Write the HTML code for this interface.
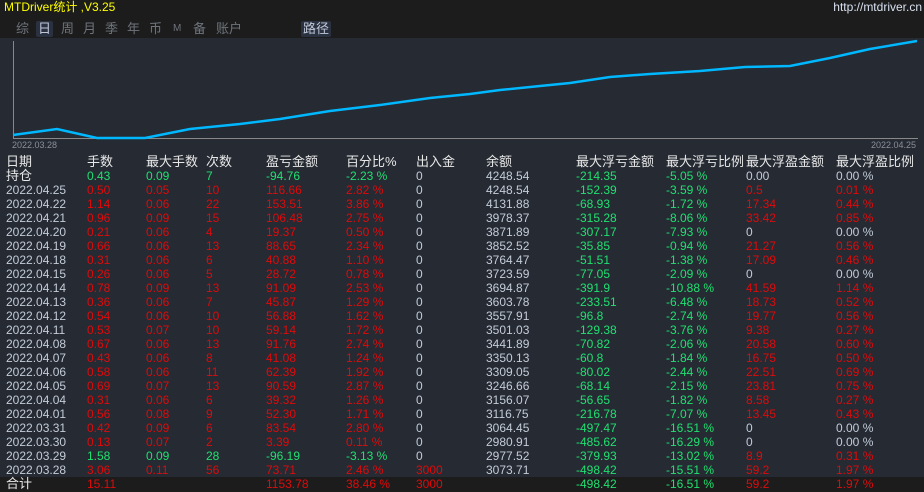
<!DOCTYPE html>
<html><head><meta charset="utf-8"><style>
body{margin:0;width:924px;height:492px;overflow:hidden;background:#252a33;font-family:"Liberation Sans","Noto Sans CJK SC",sans-serif;font-size:12px;position:relative}
.top{position:absolute;left:0;top:0;width:924px;height:38px;background:#1c1c1c}
.title{position:absolute;left:4px;top:0;color:#ffff00;font-size:12px;line-height:14px}
.url{position:absolute;right:2px;top:0;color:#d8e0f0;font-size:12px;line-height:14px}
.tab{position:absolute;top:21px;color:#6e747c;font-size:13px;line-height:16px}
.tab.on{background:#2a3140;color:#c0c8d8;padding:0 2px;border-radius:2px}
.r{position:absolute;left:0;width:924px;height:14px;line-height:14px;white-space:nowrap}
.r span{position:absolute;top:0}
.c0{left:6px}.c1{left:87px}.c2{left:146px}.c3{left:206px}.c4{left:266px}.c5{left:346px}.c6{left:416px}.c7{left:486px}.c8{left:576px}.c9{left:666px}.c10{left:746px}.c11{left:836px}
.g{color:#20e070}.d{color:#e00a0a}.w{color:#c4ccd8}.h{color:#e8e8e8;font-size:13px}
</style></head><body>
<div class="top"></div>
<div class="title">MTDriver统计 ,V3.25</div>
<div class="url">http://mtdriver.cn</div>
<div class="tab" style="left:16px">综</div>
<div class="tab on" style="left:36px">日</div>
<div class="tab" style="left:61px">周</div>
<div class="tab" style="left:83px">月</div>
<div class="tab" style="left:105px">季</div>
<div class="tab" style="left:127px">年</div>
<div class="tab" style="left:149px">币</div>
<div class="tab" style="left:173px;font-size:10px">M</div>
<div class="tab" style="left:193px">备</div>
<div class="tab" style="left:216px">账户</div>
<div class="tab on" style="left:301px">路径</div>
<svg style="position:absolute;left:0;top:38px" width="924" height="112">
<line x1="13.5" y1="3" x2="13.5" y2="100" stroke="#888" stroke-width="1"/>
<line x1="13" y1="100.5" x2="918" y2="100.5" stroke="#888" stroke-width="1"/>
<polyline fill="none" stroke="#00b8ff" stroke-width="2.5" points="13,97 57,91 97,100 145,100 190,91 240,86 280,81 330,73 380,67 430,60 470,56 500,52 540,48 570,45 610,39 650,36 700,33 745,29 790,28 830,20 870,11 917,3"/>
<text x="12" y="110" fill="#8a909a" font-size="9" font-family="Liberation Sans">2022.03.28</text>
<text x="871" y="110" fill="#8a909a" font-size="9" font-family="Liberation Sans">2022.04.25</text>
</svg>
<div class="r h" style="top:155px"><span class="c0">日期</span><span class="c1">手数</span><span class="c2">最大手数</span><span class="c3">次数</span><span class="c4">盈亏金额</span><span class="c5">百分比%</span><span class="c6">出入金</span><span class="c7">余额</span><span class="c8">最大浮亏金额</span><span class="c9">最大浮亏比例</span><span class="c10">最大浮盈金额</span><span class="c11">最大浮盈比例</span></div>
<div class="r" style="top:169px"><span class="c0 h">持仓</span><span class="c1 g">0.43</span><span class="c2 g">0.09</span><span class="c3 g">7</span><span class="c4 g">-94.76</span><span class="c5 g">-2.23 %</span><span class="c6 w">0</span><span class="c7 w">4248.54</span><span class="c8 g">-214.35</span><span class="c9 g">-5.05 %</span><span class="c10 w">0.00</span><span class="c11 w">0.00 %</span></div>
<div class="r" style="top:183px"><span class="c0 w">2022.04.25</span><span class="c1 d">0.50</span><span class="c2 d">0.05</span><span class="c3 d">10</span><span class="c4 d">116.66</span><span class="c5 d">2.82 %</span><span class="c6 w">0</span><span class="c7 w">4248.54</span><span class="c8 g">-152.39</span><span class="c9 g">-3.59 %</span><span class="c10 d">0.5</span><span class="c11 d">0.01 %</span></div>
<div class="r" style="top:197px"><span class="c0 w">2022.04.22</span><span class="c1 d">1.14</span><span class="c2 d">0.06</span><span class="c3 d">22</span><span class="c4 d">153.51</span><span class="c5 d">3.86 %</span><span class="c6 w">0</span><span class="c7 w">4131.88</span><span class="c8 g">-68.93</span><span class="c9 g">-1.72 %</span><span class="c10 d">17.34</span><span class="c11 d">0.44 %</span></div>
<div class="r" style="top:211px"><span class="c0 w">2022.04.21</span><span class="c1 d">0.96</span><span class="c2 d">0.09</span><span class="c3 d">15</span><span class="c4 d">106.48</span><span class="c5 d">2.75 %</span><span class="c6 w">0</span><span class="c7 w">3978.37</span><span class="c8 g">-315.28</span><span class="c9 g">-8.06 %</span><span class="c10 d">33.42</span><span class="c11 d">0.85 %</span></div>
<div class="r" style="top:225px"><span class="c0 w">2022.04.20</span><span class="c1 d">0.21</span><span class="c2 d">0.06</span><span class="c3 d">4</span><span class="c4 d">19.37</span><span class="c5 d">0.50 %</span><span class="c6 w">0</span><span class="c7 w">3871.89</span><span class="c8 g">-307.17</span><span class="c9 g">-7.93 %</span><span class="c10 w">0</span><span class="c11 w">0.00 %</span></div>
<div class="r" style="top:239px"><span class="c0 w">2022.04.19</span><span class="c1 d">0.66</span><span class="c2 d">0.06</span><span class="c3 d">13</span><span class="c4 d">88.65</span><span class="c5 d">2.34 %</span><span class="c6 w">0</span><span class="c7 w">3852.52</span><span class="c8 g">-35.85</span><span class="c9 g">-0.94 %</span><span class="c10 d">21.27</span><span class="c11 d">0.56 %</span></div>
<div class="r" style="top:253px"><span class="c0 w">2022.04.18</span><span class="c1 d">0.31</span><span class="c2 d">0.06</span><span class="c3 d">6</span><span class="c4 d">40.88</span><span class="c5 d">1.10 %</span><span class="c6 w">0</span><span class="c7 w">3764.47</span><span class="c8 g">-51.51</span><span class="c9 g">-1.38 %</span><span class="c10 d">17.09</span><span class="c11 d">0.46 %</span></div>
<div class="r" style="top:267px"><span class="c0 w">2022.04.15</span><span class="c1 d">0.26</span><span class="c2 d">0.06</span><span class="c3 d">5</span><span class="c4 d">28.72</span><span class="c5 d">0.78 %</span><span class="c6 w">0</span><span class="c7 w">3723.59</span><span class="c8 g">-77.05</span><span class="c9 g">-2.09 %</span><span class="c10 w">0</span><span class="c11 w">0.00 %</span></div>
<div class="r" style="top:281px"><span class="c0 w">2022.04.14</span><span class="c1 d">0.78</span><span class="c2 d">0.09</span><span class="c3 d">13</span><span class="c4 d">91.09</span><span class="c5 d">2.53 %</span><span class="c6 w">0</span><span class="c7 w">3694.87</span><span class="c8 g">-391.9</span><span class="c9 g">-10.88 %</span><span class="c10 d">41.59</span><span class="c11 d">1.14 %</span></div>
<div class="r" style="top:295px"><span class="c0 w">2022.04.13</span><span class="c1 d">0.36</span><span class="c2 d">0.06</span><span class="c3 d">7</span><span class="c4 d">45.87</span><span class="c5 d">1.29 %</span><span class="c6 w">0</span><span class="c7 w">3603.78</span><span class="c8 g">-233.51</span><span class="c9 g">-6.48 %</span><span class="c10 d">18.73</span><span class="c11 d">0.52 %</span></div>
<div class="r" style="top:309px"><span class="c0 w">2022.04.12</span><span class="c1 d">0.54</span><span class="c2 d">0.06</span><span class="c3 d">10</span><span class="c4 d">56.88</span><span class="c5 d">1.62 %</span><span class="c6 w">0</span><span class="c7 w">3557.91</span><span class="c8 g">-96.8</span><span class="c9 g">-2.74 %</span><span class="c10 d">19.77</span><span class="c11 d">0.56 %</span></div>
<div class="r" style="top:323px"><span class="c0 w">2022.04.11</span><span class="c1 d">0.53</span><span class="c2 d">0.07</span><span class="c3 d">10</span><span class="c4 d">59.14</span><span class="c5 d">1.72 %</span><span class="c6 w">0</span><span class="c7 w">3501.03</span><span class="c8 g">-129.38</span><span class="c9 g">-3.76 %</span><span class="c10 d">9.38</span><span class="c11 d">0.27 %</span></div>
<div class="r" style="top:337px"><span class="c0 w">2022.04.08</span><span class="c1 d">0.67</span><span class="c2 d">0.06</span><span class="c3 d">13</span><span class="c4 d">91.76</span><span class="c5 d">2.74 %</span><span class="c6 w">0</span><span class="c7 w">3441.89</span><span class="c8 g">-70.82</span><span class="c9 g">-2.06 %</span><span class="c10 d">20.58</span><span class="c11 d">0.60 %</span></div>
<div class="r" style="top:351px"><span class="c0 w">2022.04.07</span><span class="c1 d">0.43</span><span class="c2 d">0.06</span><span class="c3 d">8</span><span class="c4 d">41.08</span><span class="c5 d">1.24 %</span><span class="c6 w">0</span><span class="c7 w">3350.13</span><span class="c8 g">-60.8</span><span class="c9 g">-1.84 %</span><span class="c10 d">16.75</span><span class="c11 d">0.50 %</span></div>
<div class="r" style="top:365px"><span class="c0 w">2022.04.06</span><span class="c1 d">0.58</span><span class="c2 d">0.06</span><span class="c3 d">11</span><span class="c4 d">62.39</span><span class="c5 d">1.92 %</span><span class="c6 w">0</span><span class="c7 w">3309.05</span><span class="c8 g">-80.02</span><span class="c9 g">-2.44 %</span><span class="c10 d">22.51</span><span class="c11 d">0.69 %</span></div>
<div class="r" style="top:379px"><span class="c0 w">2022.04.05</span><span class="c1 d">0.69</span><span class="c2 d">0.07</span><span class="c3 d">13</span><span class="c4 d">90.59</span><span class="c5 d">2.87 %</span><span class="c6 w">0</span><span class="c7 w">3246.66</span><span class="c8 g">-68.14</span><span class="c9 g">-2.15 %</span><span class="c10 d">23.81</span><span class="c11 d">0.75 %</span></div>
<div class="r" style="top:393px"><span class="c0 w">2022.04.04</span><span class="c1 d">0.31</span><span class="c2 d">0.06</span><span class="c3 d">6</span><span class="c4 d">39.32</span><span class="c5 d">1.26 %</span><span class="c6 w">0</span><span class="c7 w">3156.07</span><span class="c8 g">-56.65</span><span class="c9 g">-1.82 %</span><span class="c10 d">8.58</span><span class="c11 d">0.27 %</span></div>
<div class="r" style="top:407px"><span class="c0 w">2022.04.01</span><span class="c1 d">0.56</span><span class="c2 d">0.08</span><span class="c3 d">9</span><span class="c4 d">52.30</span><span class="c5 d">1.71 %</span><span class="c6 w">0</span><span class="c7 w">3116.75</span><span class="c8 g">-216.78</span><span class="c9 g">-7.07 %</span><span class="c10 d">13.45</span><span class="c11 d">0.43 %</span></div>
<div class="r" style="top:421px"><span class="c0 w">2022.03.31</span><span class="c1 d">0.42</span><span class="c2 d">0.09</span><span class="c3 d">6</span><span class="c4 d">83.54</span><span class="c5 d">2.80 %</span><span class="c6 w">0</span><span class="c7 w">3064.45</span><span class="c8 g">-497.47</span><span class="c9 g">-16.51 %</span><span class="c10 w">0</span><span class="c11 w">0.00 %</span></div>
<div class="r" style="top:435px"><span class="c0 w">2022.03.30</span><span class="c1 d">0.13</span><span class="c2 d">0.07</span><span class="c3 d">2</span><span class="c4 d">3.39</span><span class="c5 d">0.11 %</span><span class="c6 w">0</span><span class="c7 w">2980.91</span><span class="c8 g">-485.62</span><span class="c9 g">-16.29 %</span><span class="c10 w">0</span><span class="c11 w">0.00 %</span></div>
<div class="r" style="top:449px"><span class="c0 w">2022.03.29</span><span class="c1 g">1.58</span><span class="c2 g">0.09</span><span class="c3 g">28</span><span class="c4 g">-96.19</span><span class="c5 g">-3.13 %</span><span class="c6 w">0</span><span class="c7 w">2977.52</span><span class="c8 g">-379.93</span><span class="c9 g">-13.02 %</span><span class="c10 d">8.9</span><span class="c11 d">0.31 %</span></div>
<div class="r" style="top:463px"><span class="c0 w">2022.03.28</span><span class="c1 d">3.06</span><span class="c2 d">0.11</span><span class="c3 d">56</span><span class="c4 d">73.71</span><span class="c5 d">2.46 %</span><span class="c6 d">3000</span><span class="c7 w">3073.71</span><span class="c8 g">-498.42</span><span class="c9 g">-15.51 %</span><span class="c10 d">59.2</span><span class="c11 d">1.97 %</span></div>
<div style="position:absolute;left:0;top:477px;width:924px;height:15px;background:#1c1c1c"></div>
<div class="r" style="top:477px"><span class="c0 h">合计</span><span class="c1 d">15.11</span><span class="c4 d">1153.78</span><span class="c5 d">38.46 %</span><span class="c6 d">3000</span><span class="c8 g">-498.42</span><span class="c9 g">-16.51 %</span><span class="c10 d">59.2</span><span class="c11 d">1.97 %</span></div>
</body></html>
